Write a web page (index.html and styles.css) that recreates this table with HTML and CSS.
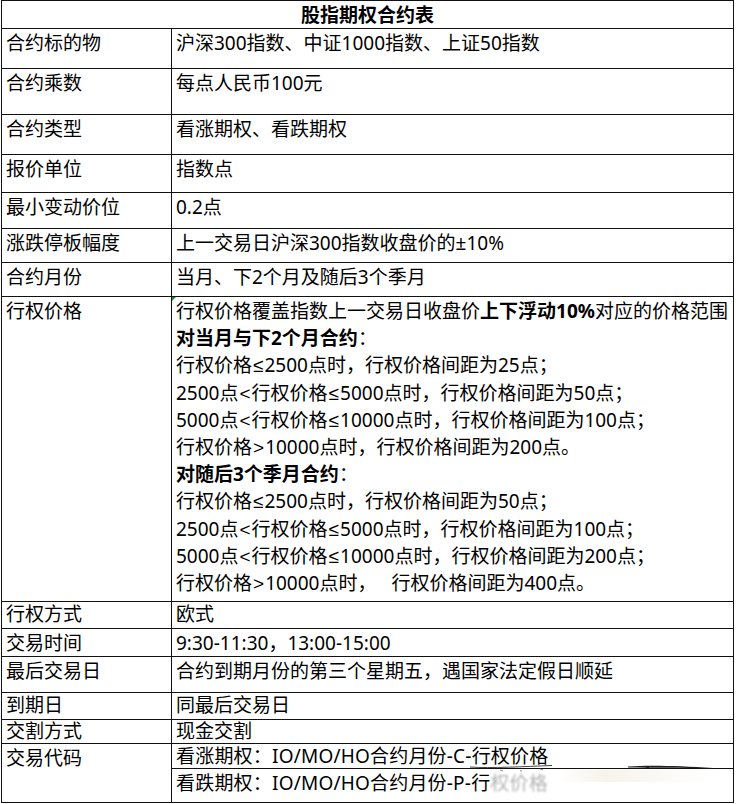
FILE: index.html
```html
<!DOCTYPE html>
<html lang="zh-CN">
<head>
<meta charset="utf-8">
<title>股指期权合约表</title>
<link rel="stylesheet" href="styles.css">
</head>
<body>
<div class="sheet">
  <div class="grid">
    <div class="cell title">股指期权合约表</div>

    <div class="cell">合约标的物</div>
    <div class="cell">沪深300指数、中证1000指数、上证50指数</div>

    <div class="cell">合约乘数</div>
    <div class="cell">每点人民币100元</div>

    <div class="cell">合约类型</div>
    <div class="cell">看涨期权、看跌期权</div>

    <div class="cell">报价单位</div>
    <div class="cell">指数点</div>

    <div class="cell">最小变动价位</div>
    <div class="cell">0.2点</div>

    <div class="cell">涨跌停板幅度</div>
    <div class="cell">上一交易日沪深300指数收盘价的±10%</div>

    <div class="cell">合约月份</div>
    <div class="cell">当月、下2个月及随后3个季月</div>

    <div class="cell">行权价格</div>
    <div class="cell multi">
      <span class="flag"></span>
      <div>行权价格覆盖指数上一交易日收盘价<b>上下浮动10%</b>对应的价格范围</div>
      <div><b>对当月与下2个月合约</b>：</div>
      <div>行权价格<span class="sym">≤</span>2500点时，行权价格间距为25点；</div>
      <div>2500点<span class="sym">&lt;</span>行权价格<span class="sym">≤</span>5000点时，行权价格间距为50点；</div>
      <div>5000点<span class="sym">&lt;</span>行权价格<span class="sym">≤</span>10000点时，行权价格间距为100点；</div>
      <div>行权价格<span class="sym">&gt;</span>10000点时，行权价格间距为200点。</div>
      <div><b>对随后3个季月合约</b>：</div>
      <div>行权价格<span class="sym">≤</span>2500点时，行权价格间距为50点；</div>
      <div>2500点<span class="sym">&lt;</span>行权价格<span class="sym">≤</span>5000点时，行权价格间距为100点；</div>
      <div>5000点<span class="sym">&lt;</span>行权价格<span class="sym">≤</span>10000点时，行权价格间距为200点；</div>
      <div>行权价格<span class="sym">&gt;</span>10000点时，<span class="gap"></span>行权价格间距为400点。</div>
    </div>

    <div class="cell tight">行权方式</div>
    <div class="cell tight">欧式</div>

    <div class="cell">交易时间</div>
    <div class="cell">9:30-11:30，13:00-15:00</div>

    <div class="cell">最后交易日</div>
    <div class="cell">合约到期月份的第三个星期五，遇国家法定假日顺延</div>

    <div class="cell tight">到期日</div>
    <div class="cell tight">同最后交易日</div>

    <div class="cell tighter">交割方式</div>
    <div class="cell tighter">现金交割</div>

    <div class="cell span2">交易代码</div>
    <div class="cell tight code">看涨期权：IO/MO/HO合约月份-C-行权价格</div>
    <div class="cell code">看跌期权：IO/MO/HO合约月份-P-行<span class="faded">权价格</span></div>
  </div>

  <svg class="mark" width="736" height="804" viewBox="0 0 736 804" aria-hidden="true">
    <defs>
      <linearGradient id="haze" x1="0" x2="1" y1="0" y2="0">
        <stop offset="0" stop-color="#f3eee4" stop-opacity="0"/>
        <stop offset="0.3" stop-color="#f3eee4" stop-opacity="0.7"/>
        <stop offset="1" stop-color="#f3eee4" stop-opacity="0"/>
      </linearGradient>
    </defs>
    <rect x="560" y="770" width="150" height="12" fill="url(#haze)"/>
    <path d="M628 766.5 C 650 765, 680 766, 713 768 L 713 768.6 C 680 767.6, 650 768.4, 628 767.6 Z" fill="#222"/>
    <path d="M470 767 C 490 768.5, 525 766.5, 552 765.5" stroke="#444" stroke-width="1" fill="none"/>
    <path d="M500 770 l 3 1 M 520 770.5 l 2 0.8 M 540 769 l 3 1" stroke="#777" stroke-width="0.8" fill="none"/>
  </svg>
</div>
</body>
</html>
```

FILE: styles.css
```css
html, body {
  margin: 0;
  padding: 0;
  background: #fff;
}

body {
  width: 736px;
  height: 804px;
  overflow: hidden;
  font-family: "Noto Sans", "Noto Sans CJK SC", sans-serif;
  font-size: 19px;
  color: #000;
}

.sheet {
  position: relative;
  width: 736px;
  height: 804px;
}

.grid {
  margin-left: 1px;
  display: grid;
  width: 731px;
  grid-template-columns: 169px 561px;
  grid-template-rows: 27px 39px 45px 39px 37px 35px 33px 33px 304px 26px 27px 35px 26px 23px 24px 33px;
  gap: 1px;
  background: #111;
  border: 1px solid #111;
}

.cell {
  background: #fff;
  padding: 4px 4px 0 4px;
  line-height: 20px;
  white-space: nowrap;
  position: relative;
}

.tight {
  padding-top: 2px;
}

.tighter {
  padding-top: 1px;
}

.code {
  letter-spacing: 0.2px;
}

.title {
  grid-column: 1 / span 2;
  text-align: center;
  font-weight: bold;
  padding: 4px 0 0 0;
}

.span2 {
  grid-row: span 2;
}

.multi {
  padding-top: 1px;
  line-height: 27.2px;
  overflow: hidden;
}

.multi b,
.title {
  font-weight: 700;
}

.sym {
  font-family: "Liberation Sans", "DejaVu Sans", sans-serif;
  margin: 0 1px;
}

.gap {
  display: inline-block;
  width: 15px;
}

.flag {
  position: absolute;
  left: 0;
  top: 0;
  width: 0;
  height: 0;
  border-top: 4px solid #1f8f3a;
  border-right: 4px solid transparent;
}

.faded {
  color: #555;
  opacity: 0.45;
  filter: blur(0.8px);
}

.mark {
  position: absolute;
  left: 0;
  top: 0;
  pointer-events: none;
}
```
